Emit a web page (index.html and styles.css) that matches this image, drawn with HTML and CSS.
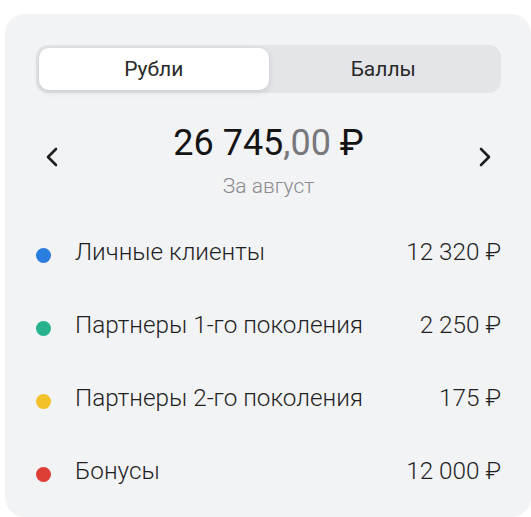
FILE: index.html
```html
<!DOCTYPE html>
<html lang="ru">
<head>
    <meta charset="UTF-8">
    <meta name="viewport" content="width=device-width, initial-scale=1.0">
    <title>Доход</title>
    <link rel="stylesheet" href="styles.css">
</head>
<body>
    <div class="card">
        <div class="tabs">
            <div class="tab active">Рубли</div>
            <div class="tab">Баллы</div>
        </div>

        <div class="total">
            <button class="arrow" aria-label="Назад">
                <svg width="14" height="20" viewBox="0 0 14 20"><path d="M11 2 L3 10 L11 18" fill="none" stroke="#1f1f1f" stroke-width="2.6" stroke-linecap="round" stroke-linejoin="round"/></svg>
            </button>
            <div class="total-text">
                <div class="amount">26 745<span class="cents">,00</span> ₽</div>
                <div class="period">За август</div>
            </div>
            <button class="arrow" aria-label="Вперёд">
                <svg width="14" height="20" viewBox="0 0 14 20"><path d="M3 2 L11 10 L3 18" fill="none" stroke="#1f1f1f" stroke-width="2.6" stroke-linecap="round" stroke-linejoin="round"/></svg>
            </button>
        </div>

        <ul class="items">
            <li class="item">
                <span class="dot blue"></span>
                <span class="name">Личные клиенты</span>
                <span class="value">12 320 ₽</span>
            </li>
            <li class="item">
                <span class="dot green"></span>
                <span class="name">Партнеры 1-го поколения</span>
                <span class="value">2 250 ₽</span>
            </li>
            <li class="item">
                <span class="dot yellow"></span>
                <span class="name">Партнеры 2-го поколения</span>
                <span class="value">175 ₽</span>
            </li>
            <li class="item">
                <span class="dot red"></span>
                <span class="name">Бонусы</span>
                <span class="value">12 000 ₽</span>
            </li>
        </ul>
    </div>
</body>
</html>
```

FILE: styles.css
```css
body {
    margin: 0;
    background: #ffffff;
    font-family: Roboto, "Noto Sans", Arial, sans-serif;
    font-weight: 300;
    color: #1f1f1f;
}
.card {
    margin: 14px 0 0 5px;
    width: 526px;
    height: 503px;
    box-sizing: border-box;
    padding: 31px 30px 0 31px;
    background: #f2f3f5;
    border-radius: 20px;
}
.tabs {
    display: flex;
    height: 48px;
    padding: 3px;
    box-sizing: border-box;
    background: #e4e5e9;
    border-radius: 12px;
}
.tab {
    flex: 1;
    display: flex;
    align-items: center;
    justify-content: center;
    font-size: 21px;
    font-weight: 400;
    color: #2a2a2a;
    border-radius: 10px;
}
.tab.active {
    background: #ffffff;
    box-shadow: 0 2px 6px rgba(0, 0, 0, 0.12);
}
.total {
    display: flex;
    align-items: center;
    justify-content: space-between;
    margin-top: 29px;
}
.arrow {
    border: none;
    background: none;
    padding: 0;
    width: 32px;
    display: flex;
    justify-content: center;
    margin-top: -8px;
}
.total-text {
    text-align: center;
}
.amount {
    font-size: 36px;
    line-height: 42px;
    font-weight: 400;
    color: #141414;
}
.cents {
    color: #77777c;
}
.period {
    margin-top: 9px;
    font-size: 21px;
    line-height: 26px;
    color: #8a8a8f;
}
.items {
    list-style: none;
    margin: 16px 0 0;
    padding: 0;
}
.item {
    display: flex;
    align-items: center;
    height: 73px;
    font-size: 24.3px;
}
.dot {
    width: 15px;
    height: 15px;
    border-radius: 50%;
    margin: 8px 24px 0 0;
}
.blue { background: #2b7de0; }
.green { background: #25b28c; }
.yellow { background: #f2c12a; }
.red { background: #dd3f36; }
.name {
    flex: 1;
}
.value {
    text-align: right;
}
```
